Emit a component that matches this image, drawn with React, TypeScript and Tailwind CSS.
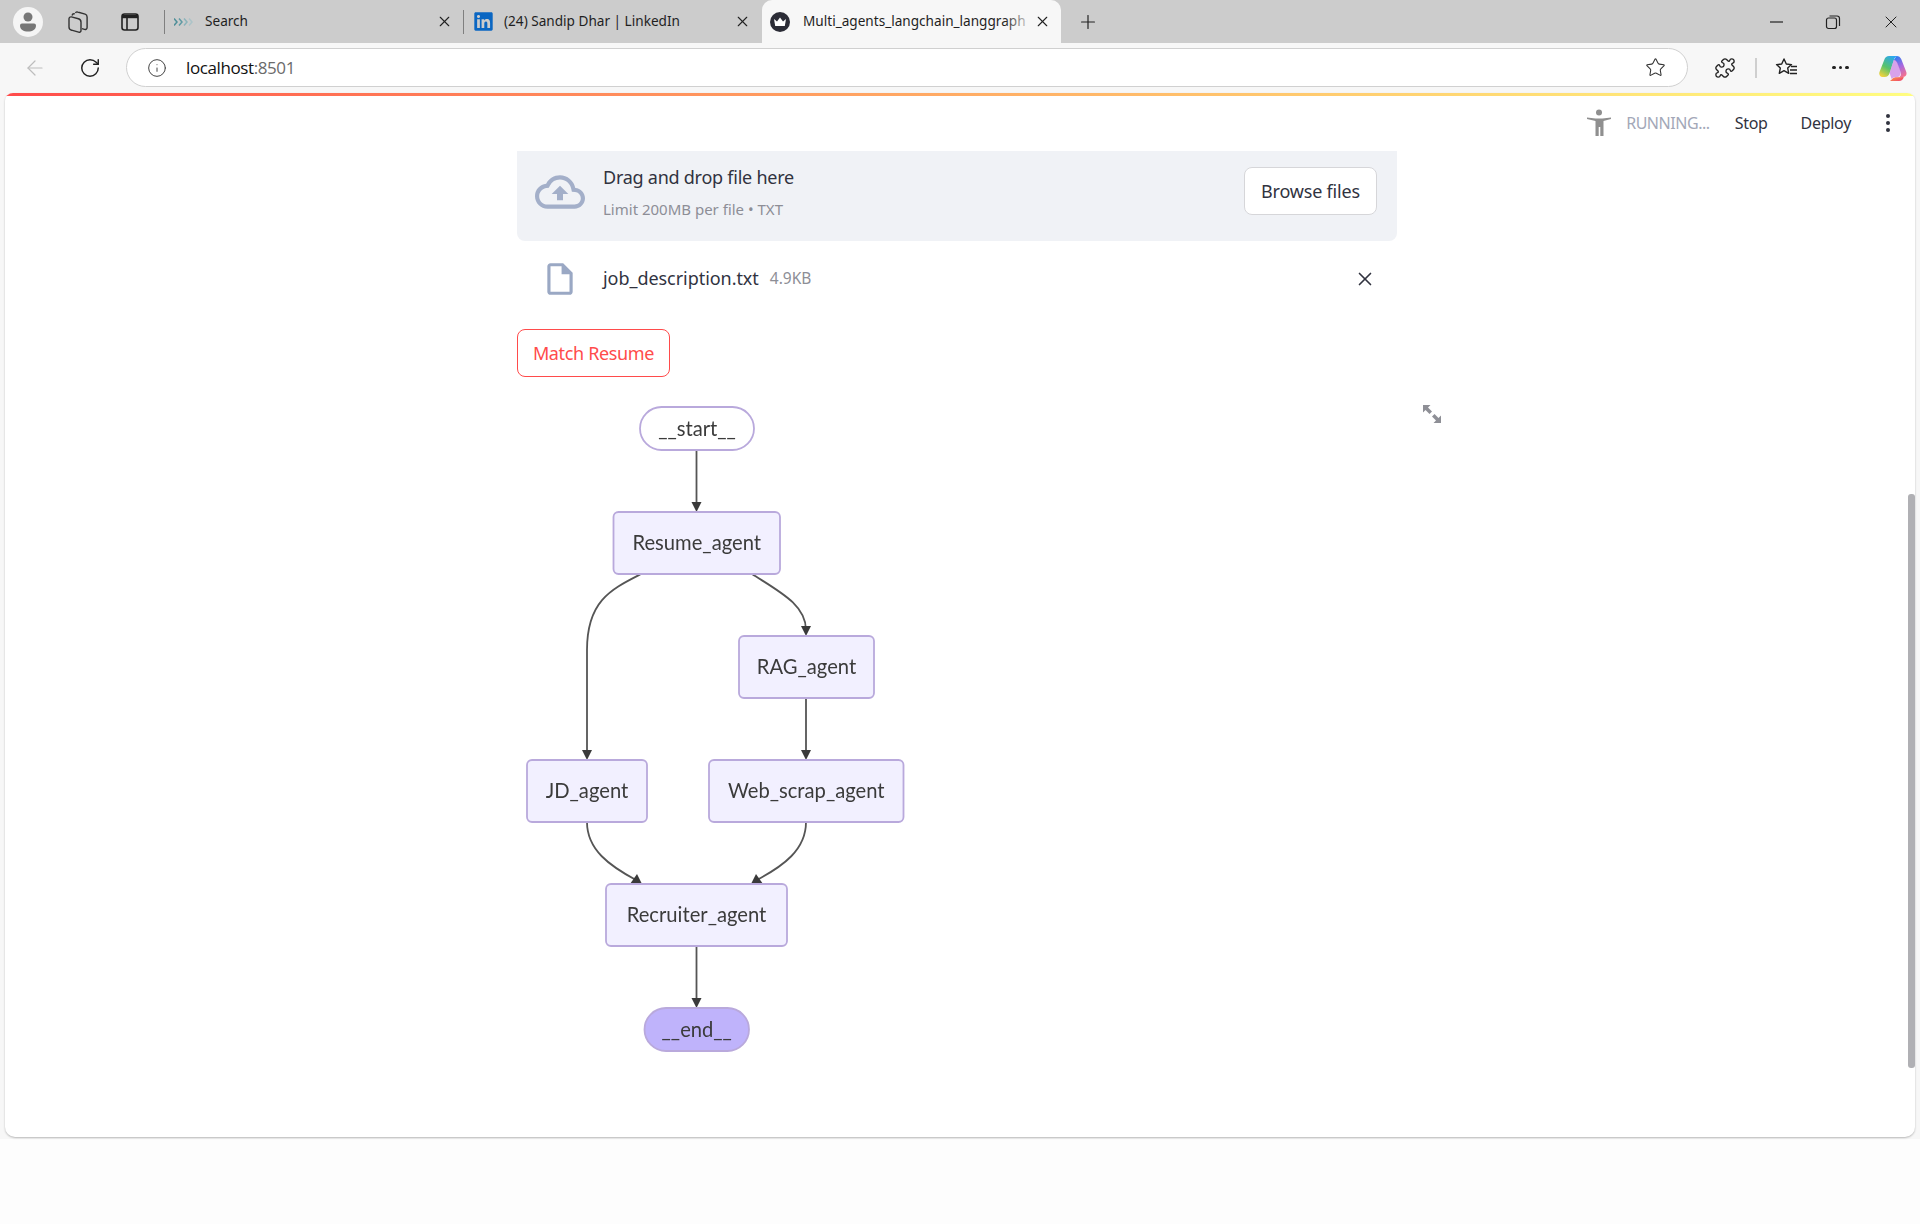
import { ArrowLeft, Info, Plus, Puzzle, RotateCw, Star, X } from "lucide-react";
import { FaLinkedin } from "react-icons/fa";
import { MdOutlineCloudUpload, MdOutlineInsertDriveFile } from "react-icons/md";

const sans = "font-['Noto_Sans','Open_Sans',sans-serif]";

function Tab({ width, title, icon, active }: { width: string; title: string; icon: React.ReactNode; active?: boolean }) {
  return (
    <div className={`${width} h-[43px] flex items-center relative ${active ? "bg-[#f7f7f7] rounded-t-[10px]" : ""}`}>
      {icon}
      <span className="flex-1 relative overflow-hidden whitespace-nowrap text-[13.6px] text-[#1f1f1f]">
        {title}
        {active && <span className="absolute right-0 top-0 bottom-0 w-[30px] bg-gradient-to-r from-transparent to-[#f7f7f7]" />}
      </span>
      <X size={17} strokeWidth={1.6} className="text-[#222] shrink-0" />
    </div>
  );
}

function TitleBar() {
  return (
    <div className="h-[43px] bg-[#cccccc] flex items-center">
      <div className="w-[164px] h-full flex items-center pl-[13px] shrink-0">
        <div className="w-[30px] h-[30px] rounded-full bg-[#f5f5f5] flex items-center justify-center">
          <svg width="20" height="22" viewBox="0 0 20 22" fill="#777">
            <circle cx="10" cy="6" r="4.5" />
            <path d="M2 14.5a2 2 0 0 1 2-2h12a2 2 0 0 1 2 2c0 4-3.5 6-8 6s-8-2-8-6z" />
          </svg>
        </div>
        <svg className="ml-[23px]" width="24" height="24" viewBox="0 0 24 24" fill="none" stroke="#333" strokeWidth="1.4">
          <path d="M6 5.500c.4-1.400 1.400-2 2.800-1.600" />
          <path d="M9.500 3c.3-.9 1.200-1.300 2.100-1l7.500 2.200c1.200.4 2 1.500 2 2.700v10.500c0 1.400-1.300 2.400-2.600 2l-2.500-.7" />
          <path d="M3 8.800c0-1.300 1.200-2.200 2.400-1.900l7 1.900c1.500.4 2.600 1.800 2.600 3.400v8.200c0 1.300-1.200 2.200-2.400 1.800l-7-2C4 19.800 3 18.500 3 17z" />
        </svg>
        <svg className="ml-[30px]" width="20" height="20" viewBox="0 0 20 20" fill="none" stroke="#222" strokeWidth="1.6">
          <rect x="2" y="2" width="16" height="16" rx="2.5" />
          <path d="M2 4.500h16" strokeWidth="3.4" />
          <path d="M7 6v12" />
        </svg>
      </div>
      <div className="w-px h-[24px] bg-[#7f7f7f] shrink-0" />
      <Tab
        width="w-[298px] pl-[9px] pr-[10px]"
        title="Search"
        icon={
          <svg className="w-[31px] shrink-0" height="10" viewBox="0 0 31 10" fill="none" strokeWidth="1.5">
            <path d="M0 1.500L3 5 0 8.500" stroke="#4f8f99" />
            <path d="M5 1.500L8 5 5 8.500" stroke="#5f9aa3" />
            <path d="M10 1.500L13 5 10 8.500" stroke="#8bb3ba" />
            <path d="M15 1.500L18 5 15 8.500" stroke="#acc4c8" />
          </svg>
        }
      />
      <div className="w-px h-[24px] bg-[#7f7f7f] shrink-0" />
      <Tab
        width="w-[298px] pl-[9px] pr-[11px]"
        title="(24) Sandip Dhar | LinkedIn"
        icon={
          <span className="w-[31px] shrink-0 flex">
            <FaLinkedin size={21} color="#0a66c2" />
          </span>
        }
      />
      <Tab
        width="w-[299px] pl-[8px] pr-[10px]"
        active
        title="Multi_agents_langchain_langgraph"
        icon={
          <svg className="w-[20px] h-[20px] mr-[13px] shrink-0" viewBox="0 0 20 20">
            <circle cx="10" cy="10" r="10" fill="#2b2c36" />
            <path d="M4 7l3 2.600L10 5.500l3 4.100L16 7l-1.200 7H5.200z" fill="#fff" />
          </svg>
        }
      />
      <Plus size={22} strokeWidth={1.3} className="ml-[16px] text-[#222]" />
      <div className="flex-1" />
      <svg width="16" height="16" viewBox="0 0 16 16" stroke="#222" fill="none" strokeWidth="1.2">
        <path d="M1 8h13" />
      </svg>
      <svg className="ml-[40px]" width="16" height="16" viewBox="0 0 16 16" stroke="#222" fill="none" strokeWidth="1.2">
        <rect x="1.5" y="4" width="10" height="10.5" rx="2" />
        <path d="M4.5 2h7.500a2.500 2.500 0 0 1 2.500 2.500V12" />
      </svg>
      <X size={20} strokeWidth={1.2} className="ml-[40px] mr-[19px] text-[#222]" />
    </div>
  );
}

function Toolbar() {
  return (
    <div className="h-[50px] bg-[#f7f7f7] flex items-center pb-[1px]">
      <ArrowLeft size={24} strokeWidth={1.2} className="ml-[23px] text-[#bdbdbd]" />
      <RotateCw size={22} strokeWidth={1.6} className="ml-[32px] text-[#222]" />
      <div className="ml-[25px] w-[1562px] h-[39px] bg-white rounded-full border border-[#d0d0d0] flex items-center pl-[20px] pr-[21px]">
        <Info size={20} strokeWidth={1.2} className="text-[#444]" />
        <span className="ml-[19px] text-[17px] tracking-[-0.4px] text-[#111] font-['Open_Sans',sans-serif]">
          localhost<span className="text-[#6b6b6b]">:8501</span>
        </span>
        <div className="flex-1" />
        <Star size={21} strokeWidth={1.2} className="text-[#333]" />
      </div>
      <Puzzle size={22} strokeWidth={1.5} className="ml-[26px] text-[#222]" />
      <div className="ml-[19px] w-[2px] h-[20px] bg-[#cfcfcf]" />
      <svg className="ml-[18px]" width="24" height="22" viewBox="0 0 24 22" fill="none" stroke="#222" strokeWidth="1.4" strokeLinejoin="round">
        <path d="M9 2l2.300 5 5.200.6-3.800 3.500 1 5.200L9 13.700l-4.700 2.600 1-5.200L1.500 7.600 6.700 7z" />
        <path d="M16 9.500h6M15 13h7M15 16.500h7" />
      </svg>
      <div className="ml-[33px] flex gap-[3px]">
        <span className="w-[3.500px] h-[3.500px] rounded-full bg-[#222]" />
        <span className="w-[3.500px] h-[3.500px] rounded-full bg-[#222]" />
        <span className="w-[3.500px] h-[3.500px] rounded-full bg-[#222]" />
      </div>
      <svg className="ml-[30px]" width="28" height="28" viewBox="0 0 28 28">
        <defs>
          <linearGradient id="copA" x1="0.7" y1="0" x2="0.2" y2="1">
            <stop offset="0" stopColor="#2aa7f0" />
            <stop offset="0.55" stopColor="#59c36a" />
            <stop offset="1" stopColor="#f2d33c" />
          </linearGradient>
          <linearGradient id="copB" x1="0.3" y1="0" x2="0.7" y2="1">
            <stop offset="0" stopColor="#2f7df0" />
            <stop offset="0.5" stopColor="#a668e0" />
            <stop offset="1" stopColor="#f4708e" />
          </linearGradient>
          <linearGradient id="copC" x1="0" y1="0" x2="1" y2="0.6">
            <stop offset="0" stopColor="#ff9a3c" />
            <stop offset="1" stopColor="#f04a6e" />
          </linearGradient>
        </defs>
        <path d="M10 2h8.500c-2 .6-3 2-3.700 4l-4.200 13c-.8 2.500-2.300 4-5 4H3.500C1 23-.4 20.500.5 18L5.400 5.400C6.100 3.300 7.800 2 10 2z" fill="url(#copA)" />
        <path d="M17.500 2c2.300 0 4 1.200 4.800 3.300l5 12.800c.9 2.700-.8 5-3.500 5h-3.500c1.700-1 2-3 1.300-5l-3-8c-.8-2.200-1.700-3.500-3.800-4.100z" fill="url(#copB)" />
        <path d="M11 27h9c2.700 0 4-1.500 4.800-4l-6.400.2c-2.800 0-4.400.6-5.400 2z" fill="url(#copC)" />
        <path d="M14.800 6l1-.3c1.300.5 2.200 1.500 2.900 3.300l2.900 8.200c.7 2-.6 5.800-3.600 5.900-2.400.1-4.200.4-5.400 1.900L10.600 19z" fill="#c05de0" opacity="0.55" />
      </svg>
    </div>
  );
}

function StatusBar() {
  return (
    <div className={`h-[55px] pb-[2px] flex items-center justify-end pr-[25px] text-[#31333f] ${sans}`}>
      <svg width="24" height="28" viewBox="0 0 24 28" fill="#8f8f8f">
        <circle cx="12" cy="3.500" r="3" />
        <path d="M0 8.500l8.500 1h7l8.500-1v1.500l-7.500 2V27h-3.200v-9h-1.600v9H8.500V12L0 10z" />
      </svg>
      <span className="ml-[15px] text-[16px] tracking-[-0.45px] text-[#a3a8b8]">RUNNING...</span>
      <span className="ml-[25px] text-[16px] tracking-[-0.3px]">Stop</span>
      <span className="ml-[33px] text-[16px] tracking-[-0.3px]">Deploy</span>
      <div className="ml-[35px] flex flex-col gap-[3px]">
        <span className="w-[4px] h-[4px] rounded-full bg-[#31333f]" />
        <span className="w-[4px] h-[4px] rounded-full bg-[#31333f]" />
        <span className="w-[4px] h-[4px] rounded-full bg-[#31333f]" />
      </div>
    </div>
  );
}

function Uploader() {
  return (
    <div className="h-[90px] bg-[#f0f2f6] rounded-b-[8px] flex items-center pl-[18px] pr-[20px]">
      <MdOutlineCloudUpload size={50} color="#a3afc9" className="shrink-0 mb-[8px]" />
      <div className="ml-[18px] flex-1 mb-[8px]">
        <div className="text-[18px] tracking-[-0.25px] leading-[24px] text-[#31333f]">Drag and drop file here</div>
        <div className="mt-[10px] text-[15px] leading-[20px] text-[#8d8e96]">Limit 200MB per file • TXT</div>
      </div>
      <button className="w-[133px] h-[48px] bg-white rounded-[8px] border border-[#d6d6d9] text-[18px] tracking-[-0.2px] text-[#31333f] mb-[10px]">
        Browse files
      </button>
    </div>
  );
}

function FileRow() {
  return (
    <div className="h-[75px] flex items-center pl-[25px] pr-[21px]">
      <MdOutlineInsertDriveFile size={38} color="#9aa8c4" className="shrink-0 -ml-[1px]" />
      <span className="ml-[24px] text-[18px] tracking-[-0.05px] text-[#31333f]">job_description.txt</span>
      <span className="ml-[11px] text-[15.5px] text-[#8d8e96]">4.9KB</span>
      <div className="flex-1" />
      <X size={22} strokeWidth={1.8} className="text-[#31333f]" />
    </div>
  );
}

// mermaid output from the langgraph app, coordinates are page px
function node(x: number, y: number, w: number, h: number, label: string, r = 5, fill = "#f2f0ff", stroke = "#b9a9dc") {
  return (
    <g key={label}>
      <rect x={x} y={y} width={w} height={h} rx={r} fill={fill} stroke={stroke} strokeWidth="1.800" />
      <text x={x + w / 2} y={y + h / 2 + 7} textAnchor="middle" fontSize="20.2" fill="#3b3b3b" fontFamily="Lato, sans-serif">
        {label}
      </text>
    </g>
  );
}

function Graph() {
  const edge = { fill: "none", stroke: "#555", strokeWidth: 1.800 };
  return (
    <svg className="w-[400px] h-[660px] shrink-0 blur-[0.3px]" viewBox="517 400 400 660">
      <path {...edge} d="M696.500 450V505" />
      <path {...edge} d="M641 574C612 589 587 600 587 650V753" />
      <path {...edge} d="M752 574C780 592 806 605 806 630" />
      <path {...edge} d="M806 698V753" />
      <path {...edge} d="M587 822C587 850 610 866 636 880" />
      <path {...edge} d="M806 822C806 850 783 866 757 880" />
      <path {...edge} d="M696.500 946V1001" />
      <g fill="#3a3a3a">
        <polygon points="691.500,502 701.500,502 696.500,512" />
        <polygon points="582,750 592,750 587,760" />
        <polygon points="801,626 811,626 806,636" />
        <polygon points="801,750 811,750 806,760" />
        <polygon points="630,884 642,884 637,874" />
        <polygon points="751,884 763,884 756,874" />
        <polygon points="691.500,998 701.500,998 696.500,1008" />
      </g>
      {node(640, 407, 114, 43, "__start__", 21.500, "#ffffff")}
      {node(613.500, 512, 166.500, 62, "Resume_agent")}
      {node(739, 636, 135, 62, "RAG_agent")}
      {node(527, 760, 120, 62, "JD_agent")}
      {node(709, 760, 194.500, 62, "Web_scrap_agent")}
      {node(606, 884, 181, 62, "Recruiter_agent")}
      {node(644.500, 1008, 104.500, 43, "__end__", 21.500, "#bfb3fb")}
    </svg>
  );
}

export default function App() {
  return (
    <div className="w-[1920px] h-[1224px] bg-[#fdfdfd] flex flex-col overflow-hidden">
      <TitleBar />
      <Toolbar />
      <div className="bg-[#f7f7f7] px-[5px] pb-[2px]">
        <div className="h-[1044px] bg-white rounded-t-[8px] rounded-b-[10px] shadow-[0_1px_2px_rgba(0,0,0,0.25)] relative overflow-hidden">
          <div className="h-[3px] bg-gradient-to-r from-[#ff4b4b] to-[#fffd80]" />
          <StatusBar />
          <div className={`ml-[512px] w-[880px] ${sans}`}>
            <Uploader />
            <FileRow />
            <div className="mt-[13px]">
              <button className="w-[153px] h-[48px] bg-white rounded-[8px] border border-[#ff4b4b] text-[18px] tracking-[-0.35px] text-[#ff4b4b]">
                Match Resume
              </button>
            </div>
            <div className="mt-[23px] flex">
              <Graph />
              <svg className="ml-[506px] mt-[5px] shrink-0" width="18" height="18" viewBox="0 0 18 18" fill="#8e8f96">
                <path d="M0 0h7.500L5 2.500 9 6.500 6.500 9 2.500 5 0 7.500z" />
                <path d="M18 18h-7.500L13 15.500 9 11.500l2.500-2.500 4 4 2.500-2.500z" />
              </svg>
            </div>
          </div>
          {/* scrollbar thumb */}
          <div className="absolute top-[401px] right-0 w-[7px] h-[574px] rounded-[3px] bg-[#b0b0b4]" />
        </div>
      </div>
    </div>
  );
}
